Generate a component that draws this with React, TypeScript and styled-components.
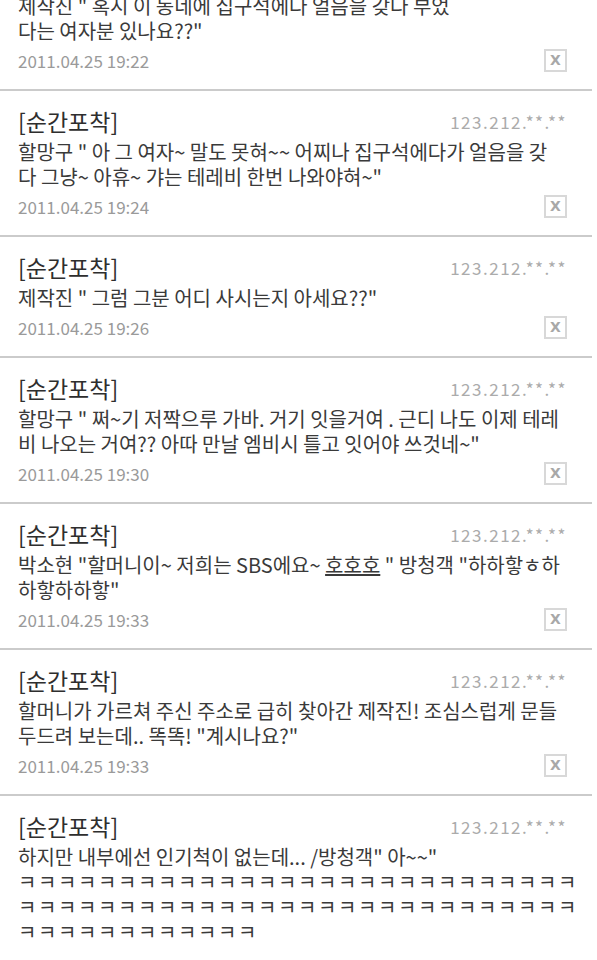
import React from "react";
import styled, { createGlobalStyle } from "styled-components";

const GlobalStyle = createGlobalStyle`
  html, body {
    margin: 0;
    padding: 0;
    background: #ffffff;
    overflow: hidden;
  }
`;

// the screenshot starts in the middle of a comment, so the list is pulled up
const List = styled.div`
  margin-top: -57px;
  font-family: "Noto Sans CJK KR", "Noto Sans", sans-serif;
`;

const Card = styled.section`
  border-top: 2px solid #cbcbcb;
  padding: 14px 25px 12px 18px;
  margin-right: 5px;
`;

const Header = styled.div`
  display: flex;
  justify-content: space-between;
  align-items: center;
  height: 32px;
  margin-bottom: 2px;
`;

const Title = styled.span`
  font-size: 23px;
  color: #2e2e2e;
`;

const Ip = styled.span`
  font-size: 17px;
  color: #ababab;
  letter-spacing: 1.5px;
`;

const Message = styled.div`
  font-size: 20px;
  line-height: 25px;
  color: #3a3a3a;
  white-space: nowrap;
`;

const Line = styled.div<{ $spread?: boolean }>`
  letter-spacing: ${(p) => (p.$spread ? "1.6px" : "normal")};
`;

const Under = styled.span`
  text-decoration: underline;
`;

const Footer = styled.div`
  display: flex;
  justify-content: space-between;
  align-items: center;
  height: 34px;
`;

const Date = styled.span`
  font-size: 17px;
  color: #9a9a9a;
`;

const Close = styled.span`
  display: flex;
  align-items: center;
  justify-content: center;
  width: 23px;
  height: 23px;
  box-sizing: border-box;
  border: 2px solid #d8d8d8;
  color: #a8a8a8;
  font-family: "DejaVu Sans", sans-serif;
  font-size: 14px;
  font-weight: bold;
  line-height: 1;
`;

interface IComment {
  lines: React.ReactNode[];
  date?: string;
  laugh?: string[];
}

const k = (n: number) => "ㅋ".repeat(n);

const comments: IComment[] = [
  {
    lines: ['제작진 " 혹시 이 동네에 집구석에다 얼음을 갖다 부었', '다는 여자분 있나요??"'],
    date: "2011.04.25 19:22",
  },
  {
    lines: [
      '할망구 " 아 그 여자~ 말도 못혀~~ 어찌나 집구석에다가 얼음을 갖',
      '다 그냥~ 아휴~ 갸는 테레비 한번 나와야혀~"',
    ],
    date: "2011.04.25 19:24",
  },
  {
    lines: ['제작진 " 그럼 그분 어디 사시는지 아세요??"'],
    date: "2011.04.25 19:26",
  },
  {
    lines: [
      '할망구 " 쩌~기 저짝으루 가바. 거기 잇을거여 . 근디 나도 이제 테레',
      '비 나오는 거여?? 아따 만날 엠비시 틀고 잇어야 쓰것네~"',
    ],
    date: "2011.04.25 19:30",
  },
  {
    lines: [
      <>
        박소현 "할머니이~ 저희는 SBS에요~ <Under>호호호</Under> " 방청객 "하하핳ㅎ하
      </>,
      '하핳하하핳"',
    ],
    date: "2011.04.25 19:33",
  },
  {
    lines: [
      "할머니가 가르쳐 주신 주소로 급히 찾아간 제작진! 조심스럽게 문들",
      '두드려 보는데.. 똑똑! "계시나요?"',
    ],
    date: "2011.04.25 19:33",
  },
  {
    lines: ['하지만 내부에선 인기척이 없는데... /방청객" 아~~"'],
    laugh: [k(28), k(28), k(12)],
  },
];

const Comment: React.FC<{ comment: IComment }> = ({ comment }) => {
  const { lines, date, laugh } = comment;

  return (
    <Card>
      <Header>
        <Title>[순간포착]</Title>
        <Ip>123.212.**.**</Ip>
      </Header>
      <Message>
        {lines.map((line, i) => (
          <Line key={i}>{line}</Line>
        ))}
        {laugh?.map((line, i) => (
          <Line key={"k" + i} $spread>
            {line}
          </Line>
        ))}
      </Message>
      {date && (
        <Footer>
          <Date>{date}</Date>
          <Close>X</Close>
        </Footer>
      )}
    </Card>
  );
};

const App: React.FC = () => (
  <>
    <GlobalStyle />
    <List>
      {comments.map((c, i) => (
        <Comment key={i} comment={c} />
      ))}
    </List>
  </>
);

export default App;
